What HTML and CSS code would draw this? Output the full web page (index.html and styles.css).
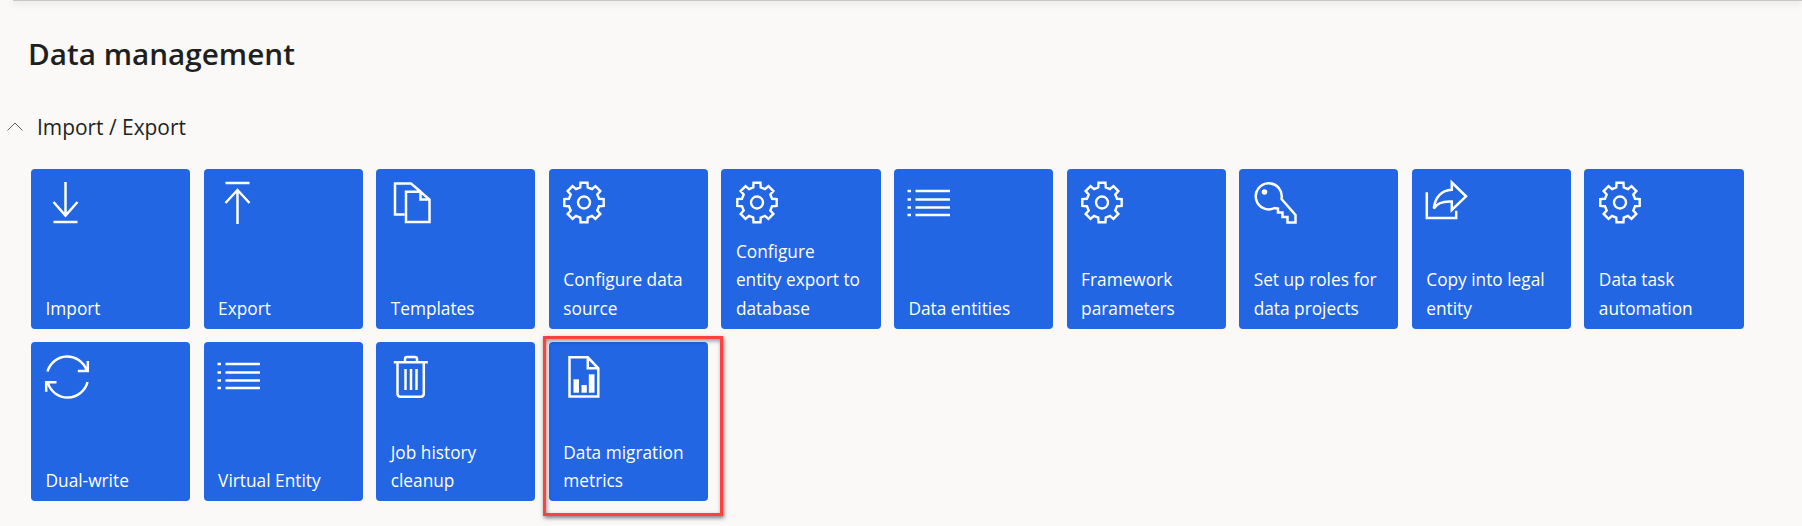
FILE: index.html
```html
<!DOCTYPE html>
<html lang="en">
<head>
<meta charset="utf-8">
<title>Data management</title>
<link rel="stylesheet" href="styles.css">
</head>
<body>
<svg class="defs" width="0" height="0" aria-hidden="true">
  <defs>
    <symbol id="gear" viewBox="0 0 48 48">
      <g transform="translate(24 23.5)" fill="none" stroke="#fff" stroke-width="2.4">
        <path d="M-3.75-15.04 L-3.47-19.7 3.47-19.7 3.75-15.04 7.98-13.29 11.47-16.38 16.38-11.47 13.29-7.98 15.04-3.75 19.7-3.47 19.7 3.47 15.04 3.75 13.29 7.98 16.38 11.47 11.47 16.38 7.98 13.29 3.75 15.04 3.47 19.7 -3.47 19.7 -3.75 15.04 -7.98 13.29 -11.47 16.38 -16.38 11.47 -13.29 7.98 -15.04 3.75 -19.7 3.47 -19.7 -3.47 -15.04 -3.75 -13.29 -7.98 -16.38 -11.47 -11.47 -16.38 -7.98 -13.29 Z"/>
        <circle r="6"/>
      </g>
    </symbol>
    <symbol id="list" viewBox="0 0 48 48">
      <g stroke="#fff" stroke-width="2.6" fill="none">
        <path d="M10.5 12H45M10.5 20.5H45M10.5 28.5H45M10.5 36H45"/>
        <path d="M2.5 12H6M2.5 20.5H6M2.5 28.5H6M2.5 36H6"/>
      </g>
    </symbol>
  </defs>
</svg>
<div class="topbar"></div>
<main class="page">
  <h1 class="title">Data management</h1>
  <h2 class="section"><svg class="chevron" viewBox="0 0 16 10"><path d="M.5 8.5 8 1l7.500 7.500"/></svg>Import / Export</h2>
  <div class="tiles">
    <a class="tile"><svg class="icon" viewBox="0 0 48 48"><path d="M22.500 3V37M10.500 23 22.500 36.500 34.500 23M10.500 43H34.500"/></svg><span class="label">Import</span></a>
    <a class="tile"><svg class="icon" viewBox="0 0 48 48"><path d="M10.500 4H34.500M22.500 45V11.500M10.500 24 22.500 11 34.500 24"/></svg><span class="label">Export</span></a>
    <a class="tile"><svg class="icon" viewBox="0 0 48 48"><path d="M16.500 35.500H7V4.500H23L33 13M18 12.800H32.500L41.500 20.500V43H18ZM32.500 12.800V20.500H41.500"/></svg><span class="label">Templates</span></a>
    <a class="tile"><svg class="icon"><use href="#gear"/></svg><span class="label">Configure data<br>source</span></a>
    <a class="tile"><svg class="icon"><use href="#gear"/></svg><span class="label">Configure<br>entity export to<br>database</span></a>
    <a class="tile"><svg class="icon"><use href="#list"/></svg><span class="label">Data entities</span></a>
    <a class="tile"><svg class="icon"><use href="#gear"/></svg><span class="label">Framework<br>parameters</span></a>
    <a class="tile"><svg class="icon" viewBox="0 0 48 48"><path d="M23.500 29A13 13 0 1 1 30.500 20L44.500 36V43.500H36.500V38H31.500V33.500H27V29.500Z"/><circle class="solid" cx="13.500" cy="13" r="2.800"/></svg><span class="label">Set up roles for<br>data projects</span></a>
    <a class="tile"><svg class="icon" viewBox="0 0 48 48"><path d="M3.800 13.300V39H33.200V31.700M28.800 3.500 43 17.300 28.800 31V22.500C20 22 14 24 10.800 29.500 12 18 19 11 28.800 10.700Z"/></svg><span class="label">Copy into legal<br>entity</span></a>
    <a class="tile"><svg class="icon"><use href="#gear"/></svg><span class="label">Data task<br>automation</span></a>
    <a class="tile"><svg class="icon" viewBox="0 0 48 48"><path d="M4.500 19.500A20.500 20.500 0 0 1 43.500 18M44.800 9V19H34.800M44.500 30A20.500 20.500 0 0 1 5 31M3.200 39.700V30.300H13.500"/></svg><span class="label">Dual-write</span></a>
    <a class="tile"><svg class="icon"><use href="#list"/></svg><span class="label">Virtual Entity</span></a>
    <a class="tile"><svg class="icon" viewBox="0 0 48 48"><path d="M5.800 10.300H39.800M17 10V7Q17 5 19 5H27Q29 5 29 7V10M9.500 10.300V41.500Q9.500 44.700 12.500 44.700H32.800Q35.800 44.700 35.800 41.500V10.300M17.500 17V38M23 17V38M28.500 17V38"/></svg><span class="label">Job history<br>cleanup</span></a>
    <a class="tile marked"><svg class="icon" viewBox="0 0 48 48"><path d="M9.500 5.300H27.800L38.300 16.300V44.500H9.500ZM27.800 5.300V16.300H38.300"/><rect class="solid" x="13.500" y="27.300" width="5.500" height="13.400"/><rect class="solid" x="21.500" y="33" width="5.300" height="7.700"/><rect class="solid" x="28.800" y="22.300" width="5.700" height="18.400"/></svg><span class="label">Data migration<br>metrics</span></a>
  </div>
</main>
</body>
</html>
```
FILE: styles.css
```css
* { box-sizing: border-box; }
html, body { margin: 0; height: 100%; }
body {
  background: #faf9f8;
  color: #201f1e;
  font-family: "Open Sans", "Noto Sans", sans-serif;
  overflow: hidden;
  position: relative;
}
.defs { position: absolute; }
.topbar {
  height: 1px;
  margin-left: 13px;
  background: #c8c6c3;
  box-shadow: 0 1px 7px rgba(0, 0, 0, .38);
}
.page { padding: 0; }
.title {
  margin: 33px 0 0 28px;
  font-size: 29.700px;
  line-height: 40px;
  font-weight: 600;
}
.section {
  display: flex;
  align-items: center;
  margin: 39px 0 0 7px;
  height: 28px;
  font-size: 20.900px;
  font-weight: 400;
  line-height: 28px;
}
.chevron {
  width: 16px;
  height: 10px;
  margin-right: 14px;
  fill: none;
  stroke: #605e5c;
  stroke-width: 1;
}
.tiles {
  display: grid;
  grid-template-columns: repeat(10, 159.300px);
  grid-auto-rows: 159.300px;
  gap: 13.300px;
  margin: 28.300px 0 0 31px;
}
.tile {
  display: flex;
  flex-direction: column;
  justify-content: space-between;
  padding: 10px 8px 5.800px 14.500px;
  border-radius: 4px;
  background: #2266e3;
  color: #fff;
  position: relative;
}
.icon {
  display: block;
  flex: none;
  width: 48px;
  height: 48px;
  margin-left: -3px;
  fill: none;
  stroke: #fff;
  stroke-width: 2.500;
}
.icon .solid { fill: #fff; stroke: none; }
.label {
  font-size: 17.300px;
  line-height: 28.200px;
  white-space: nowrap;
}
.marked::after {
  content: "";
  box-sizing: border-box;
  position: absolute;
  left: -6px;
  top: -6px;
  width: 180px;
  height: 180px;
  border: 3px solid #ff4040;
  box-shadow: 1px 2px 4px rgba(0, 0, 0, .5), inset 1px 2px 4px rgba(0, 0, 0, .4);
  pointer-events: none;
}
```
